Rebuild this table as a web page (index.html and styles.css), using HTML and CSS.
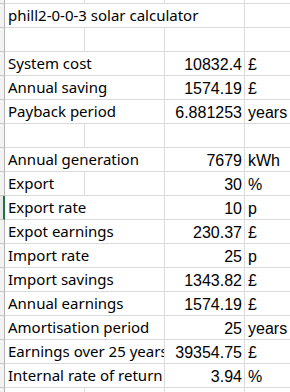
FILE: index.html
```html
<!DOCTYPE html>
<html>
<head>
<meta charset="utf-8">
<link rel="stylesheet" href="styles.css">
</head>
<body>
<div class="sheet">
  <div class="row row-top"><div class="hdr"></div><div class="cell"></div><div class="cell"></div><div class="cell"></div><div class="cell"></div></div>
  <div class="row"><div class="hdr"></div><div class="cell label span3">phill2-0-0-3 solar calculator</div><div class="cell"></div></div>
  <div class="row"><div class="hdr"></div><div class="cell"></div><div class="cell"></div><div class="cell"></div><div class="cell"></div></div>
  <div class="row"><div class="hdr"></div><div class="cell label span2">System cost</div><div class="cell num">10832.4</div><div class="cell unit">£</div></div>
  <div class="row"><div class="hdr"></div><div class="cell label span2">Annual saving</div><div class="cell num">1574.19</div><div class="cell unit">£</div></div>
  <div class="row"><div class="hdr"></div><div class="cell label span2">Payback period</div><div class="cell num">6.881253</div><div class="cell unit">years</div></div>
  <div class="row"><div class="hdr"></div><div class="cell"></div><div class="cell"></div><div class="cell"></div><div class="cell"></div></div>
  <div class="row"><div class="hdr"></div><div class="cell label span2">Annual generation</div><div class="cell num">7679</div><div class="cell unit">kWh</div></div>
  <div class="row"><div class="hdr"></div><div class="cell label">Export</div><div class="cell"></div><div class="cell num">30</div><div class="cell unit">%</div></div>
  <div class="row"><div class="hdr hdr-selected"></div><div class="cell label span2">Export rate</div><div class="cell num">10</div><div class="cell unit">p</div></div>
  <div class="row"><div class="hdr"></div><div class="cell label span2">Expot earnings</div><div class="cell num">230.37</div><div class="cell unit">£</div></div>
  <div class="row"><div class="hdr"></div><div class="cell label span2">Import rate</div><div class="cell num">25</div><div class="cell unit">p</div></div>
  <div class="row"><div class="hdr"></div><div class="cell label span2">Import savings</div><div class="cell num">1343.82</div><div class="cell unit">£</div></div>
  <div class="row"><div class="hdr"></div><div class="cell label span2">Annual earnings</div><div class="cell num">1574.19</div><div class="cell unit">£</div></div>
  <div class="row"><div class="hdr"></div><div class="cell label span2">Amortisation period</div><div class="cell num">25</div><div class="cell unit">years</div></div>
  <div class="row"><div class="hdr"></div><div class="cell label span2">Earnings over 25 years</div><div class="cell num">39354.75</div><div class="cell unit">£</div></div>
  <div class="row"><div class="hdr"></div><div class="cell label span2">Internal rate of return</div><div class="cell num">3.94</div><div class="cell unit">%</div></div>
  <div class="row row-bottom"><div class="hdr"></div><div class="cell"></div><div class="cell"></div><div class="cell"></div><div class="cell"></div></div>
</div>
</body>
</html>
```

FILE: styles.css
```css
html, body {
  margin: 0;
  padding: 0;
  background: #ffffff;
}

.sheet {
  width: 290px;
  height: 392px;
  overflow: hidden;
  background: #ffffff;
}

.row {
  display: grid;
  grid-template-columns: 5px repeat(4, 80px);
  height: 24px;
  width: 325px;
}

.row-top {
  height: 4px;
}

.row-bottom {
  height: 8px;
}

.hdr {
  box-sizing: border-box;
  background: #f3f3f3;
  border-right: 1px solid #b4b4b4;
  border-bottom: 1px solid #c8c8c8;
}

.hdr-selected {
  border-right: 2px solid #1f7244;
  background: #e8e8e8;
}

.cell {
  box-sizing: border-box;
  border-right: 1px solid #dadada;
  border-bottom: 1px solid #dadada;
  overflow: hidden;
  white-space: nowrap;
  color: #000000;
  height: 100%;
}

.span2 {
  grid-column: span 2;
}

.span3 {
  grid-column: span 3;
}

.label {
  font-family: "Noto Sans", "Open Sans", sans-serif;
  font-size: 15px;
  line-height: 23px;
  padding-left: 3px;
  padding-top: 0;
}

.num {
  font-family: "Liberation Sans", Arial, sans-serif;
  font-size: 16px;
  line-height: 23px;
  padding-top: 1px;
  padding-right: 2px;
  text-align: right;
}

.unit {
  font-family: "Liberation Sans", Arial, sans-serif;
  font-size: 16px;
  line-height: 23px;
  padding-top: 1px;
  padding-left: 3px;
}
```
